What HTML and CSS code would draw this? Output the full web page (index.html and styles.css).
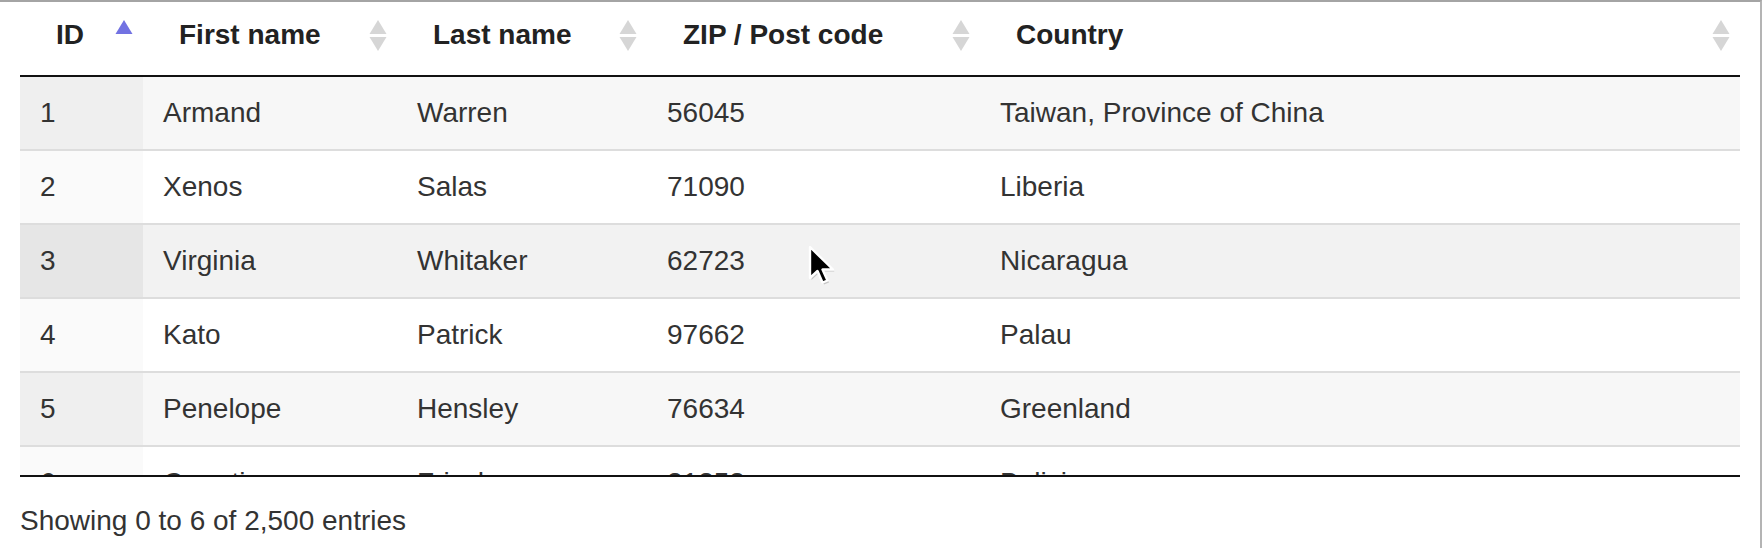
FILE: index.html
```html
<!DOCTYPE html>
<html lang="en">
<head>
<meta charset="utf-8">
<title>DataTables scroller</title>
<link rel="stylesheet" href="styles.css">
</head>
<body>
<div class="frame">
  <div class="dt">
    <div class="dt-head">
      <table class="grid">
        <colgroup>
          <col class="c-id"><col class="c-first"><col class="c-last"><col class="c-zip"><col class="c-country">
        </colgroup>
        <thead>
          <tr>
            <th><div class="th-in"><span>ID</span>
              <svg class="sort" viewBox="0 0 18 31" width="18" height="31"><polygon class="asc" points="9,0 17.5,14 0.5,14"/></svg></div></th>
            <th><div class="th-in"><span>First name</span>
              <svg class="sort" viewBox="0 0 18 31" width="18" height="31"><polygon points="9,0 17.5,14 0.5,14"/><polygon points="0.5,17 17.5,17 9,31"/></svg></div></th>
            <th><div class="th-in"><span>Last name</span>
              <svg class="sort" viewBox="0 0 18 31" width="18" height="31"><polygon points="9,0 17.5,14 0.5,14"/><polygon points="0.5,17 17.5,17 9,31"/></svg></div></th>
            <th><div class="th-in"><span>ZIP / Post code</span>
              <svg class="sort" viewBox="0 0 18 31" width="18" height="31"><polygon points="9,0 17.5,14 0.5,14"/><polygon points="0.5,17 17.5,17 9,31"/></svg></div></th>
            <th><div class="th-in"><span>Country</span>
              <svg class="sort" viewBox="0 0 18 31" width="18" height="31"><polygon points="9,0 17.5,14 0.5,14"/><polygon points="0.5,17 17.5,17 9,31"/></svg></div></th>
          </tr>
        </thead>
      </table>
    </div>
    <div class="dt-body">
      <table class="grid">
        <colgroup>
          <col class="c-id"><col class="c-first"><col class="c-last"><col class="c-zip"><col class="c-country">
        </colgroup>
        <tbody>
          <tr class="odd"><td class="s1">1</td><td>Armand</td><td>Warren</td><td>56045</td><td>Taiwan, Province of China</td></tr>
          <tr class="even"><td class="s1">2</td><td>Xenos</td><td>Salas</td><td>71090</td><td>Liberia</td></tr>
          <tr class="odd hover"><td class="s1">3</td><td>Virginia</td><td>Whitaker</td><td>62723</td><td>Nicaragua</td></tr>
          <tr class="even"><td class="s1">4</td><td>Kato</td><td>Patrick</td><td>97662</td><td>Palau</td></tr>
          <tr class="odd"><td class="s1">5</td><td>Penelope</td><td>Hensley</td><td>76634</td><td>Greenland</td></tr>
          <tr class="even"><td class="s1">6</td><td>Quentin</td><td>Frisch</td><td>21253</td><td>Bolivia</td></tr>
        </tbody>
      </table>
    </div>
    <div class="dt-info">Showing 0 to 6 of 2,500 entries</div>
  </div>
  <svg class="cursor" viewBox="0 0 32 44" width="32" height="44">
    <path class="cursor-shadow" d="M4.5,4 L4.5,35 L12,28 L17,39.5 L22,37.5 L17,26.5 L27.5,26.5 Z"/>
    <path class="cursor-arrow" d="M3,2 L3,33 L10.5,26 L15.5,37.5 L20.5,35.5 L15.5,24.5 L26,24.5 Z"/>
  </svg>
</div>
</body>
</html>
```

FILE: styles.css
```css
* { box-sizing: border-box; }

html, body {
  margin: 0;
  padding: 0;
  background: #fff;
}

body {
  font-family: "Liberation Sans", Arial, Helvetica, sans-serif;
  color: #333;
  width: 1762px;
  height: 548px;
  overflow: hidden;
}

.frame {
  position: relative;
  width: 1762px;
  height: 548px;
  border-top: 2px solid #a4a4a4;
  border-right: 2px solid #b4b4b4;
  padding: 0 20px;
}

.dt {
  width: 1720px;
}

.grid {
  width: 1720px;
  table-layout: fixed;
  border-collapse: separate;
  border-spacing: 0;
  font-size: 28px;
  line-height: 32px;
}

.c-id { width: 123px; }
.c-first { width: 254px; }
.c-last { width: 250px; }
.c-zip { width: 333px; }
.c-country { width: 760px; }

.grid th {
  text-align: left;
  font-weight: bold;
  color: #222;
  padding: 17px 10px 24px 36px;
  border-bottom: 2px solid #111;
  white-space: nowrap;
}

.th-in {
  display: flex;
  align-items: center;
  justify-content: space-between;
}

.sort {
  display: block;
  flex: none;
}

.sort polygon {
  fill: #d6d6d6;
}

.sort polygon.asc {
  fill: #7272e2;
}

.dt-body {
  height: 400px;
  overflow: hidden;
  border-bottom: 2px solid #111;
}

.grid td {
  padding: 20px;
  border-top: 2px solid #dddddd;
  white-space: nowrap;
  color: #333;
}

.grid tbody tr:first-child td {
  border-top: none;
}

.grid tr.odd td { background: #f7f7f7; }
.grid tr.odd td.s1 { background: #efefef; }
.grid tr.even td { background: #ffffff; }
.grid tr.even td.s1 { background: #fafafa; }
.grid tr.hover td { background: #f2f2f2; }
.grid tr.hover td.s1 { background: #e6e6e6; }

.dt-info {
  padding-top: 28px;
  font-size: 28px;
  line-height: 32px;
  color: #333;
}

.cursor {
  position: absolute;
  left: 807px;
  top: 243px;
}

.cursor-shadow {
  fill: rgba(0, 0, 0, 0.18);
}

.cursor-arrow {
  fill: #000;
  stroke: #fff;
  stroke-width: 2.4;
  stroke-linejoin: round;
}
```
